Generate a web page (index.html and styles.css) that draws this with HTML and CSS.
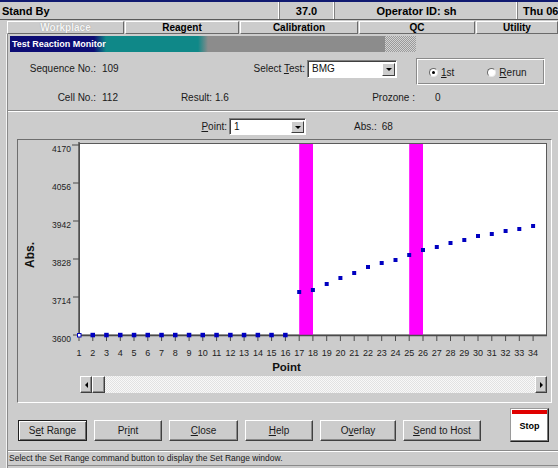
FILE: index.html
```html
<!DOCTYPE html>
<html lang="en">
<head>
<meta charset="utf-8">
<title>Test Reaction Monitor</title>
<link rel="stylesheet" href="styles.css">
</head>
<body>
<div class="app">
  <div class="statusbar">
    <div class="cell cell-state">Stand By</div>
    <div class="cell cell-temp">37.0</div>
    <div class="cell cell-op">Operator ID: sh</div>
    <div class="cell cell-date">Thu 06/</div>
  </div>
  <div class="tabs">
    <div class="tab tab-active t1">Workplace</div>
    <div class="tab t2">Reagent</div>
    <div class="tab t3">Calibration</div>
    <div class="tab t4">QC</div>
    <div class="tab t5">Utility</div>
  </div>
  <div class="window">
    <div class="titlebar">Test Reaction Monitor</div>
    <div class="row row1">
      <span class="lbl lbl-main">Sequence No.:</span>
      <span class="val val-main">109</span>
      <span class="lbl lbl-test">Select <u>T</u>est:</span>
      <div class="combo combo-test"><span class="combo-text">BMG</span><span class="combo-btn"><i class="tri-down"></i></span></div>
      <div class="radiogroup">
        <div class="radio"><span class="radio-dot checked"></span><span><u>1</u>st</span></div>
        <div class="radio radio2"><span class="radio-dot"></span><span><u>R</u>erun</span></div>
      </div>
    </div>
    <div class="row row2">
      <span class="lbl lbl-main">Cell No.:</span>
      <span class="val val-main">112</span>
      <span class="lbl lbl-result">Result:</span>
      <span class="val val-result">1.6</span>
      <span class="lbl lbl-prozone">Prozone :</span>
      <span class="val val-prozone">0</span>
    </div>
    <div class="sep"></div>
    <div class="row row3">
      <span class="lbl lbl-point"><u>P</u>oint:</span>
      <div class="combo combo-point"><span class="combo-text">1</span><span class="combo-btn"><i class="tri-down"></i></span></div>
      <span class="lbl lbl-abs">Abs.:</span>
      <span class="val val-abs">68</span>
    </div>
    <div class="chart-panel">
      <svg class="chart" width="533" height="220" viewBox="18 140 533 220">
        <rect x="79.5" y="143.5" width="467" height="191.5" fill="#ffffff" stroke="#5a5a5a"/>
        <rect x="299.2" y="144" width="13.8" height="191" fill="#ff00ff"/>
        <rect x="409.2" y="144" width="13.8" height="191" fill="#ff00ff"/>
        <path d="M79 142V337M79 335.5H547" stroke="#4a4a4a" stroke-width="1.4" fill="none"/>
        <path d="M72 145H79M73 183H79M73 221H79M73 259H79M73 297H79M73 335H79" stroke="#4a4a4a" stroke-width="1" fill="none"/>
        <path d="M79 336V341M92.8 336V341M106.5 336V341M120.3 336V341M134 336V341M147.8 336V341M161.6 336V341M175.3 336V341M189.1 336V341M202.8 336V341M216.6 336V341M230.4 336V341M244.1 336V341M257.9 336V341M271.6 336V341M285.4 336V341M299.2 336V341M312.9 336V341M326.7 336V341M340.4 336V341M354.2 336V341M368 336V341M381.7 336V341M395.5 336V341M409.2 336V341M423 336V341M436.8 336V341M450.5 336V341M464.3 336V341M478 336V341M491.8 336V341M505.6 336V341M519.3 336V341M533.1 336V341" stroke="#4a4a4a" stroke-width="1" fill="none"/>
        <g class="ylab">
          <text x="71" y="151.5">4170</text>
          <text x="71" y="189.5">4056</text>
          <text x="71" y="227.5">3942</text>
          <text x="71" y="265.5">3828</text>
          <text x="71" y="303.5">3714</text>
          <text x="71" y="341.5">3600</text>
        </g>
        <text class="ytitle" x="30" y="255" transform="rotate(-90 30 255)">Abs.</text>
        <g class="xlab">
          <text x="79" y="356">1</text><text x="92.8" y="356">2</text><text x="106.5" y="356">3</text><text x="120.3" y="356">4</text><text x="134" y="356">5</text><text x="147.8" y="356">6</text><text x="161.6" y="356">7</text><text x="175.3" y="356">8</text><text x="189.1" y="356">9</text><text x="202.8" y="356">10</text><text x="216.6" y="356">11</text><text x="230.4" y="356">12</text><text x="244.1" y="356">13</text><text x="257.9" y="356">14</text><text x="271.6" y="356">15</text><text x="285.4" y="356">16</text><text x="299.2" y="356">17</text><text x="312.9" y="356">18</text><text x="326.7" y="356">19</text><text x="340.4" y="356">20</text><text x="354.2" y="356">21</text><text x="368" y="356">22</text><text x="381.7" y="356">23</text><text x="395.5" y="356">24</text><text x="409.2" y="356">25</text><text x="423" y="356">26</text><text x="436.8" y="356">27</text><text x="450.5" y="356">28</text><text x="464.3" y="356">29</text><text x="478" y="356">30</text><text x="491.8" y="356">31</text><text x="505.6" y="356">32</text><text x="519.3" y="356">33</text><text x="533.1" y="356">34</text>
        </g>
        <rect x="77.5" y="333.5" width="3.5" height="3.5" fill="#ffffff" stroke="#0000c0" stroke-width="1"/>
        <g fill="#0000c0">
          <rect x="90.5" y="332.8" width="4.5" height="4.5"/><rect x="104.2" y="332.8" width="4.5" height="4.5"/><rect x="118" y="332.8" width="4.5" height="4.5"/><rect x="131.8" y="332.8" width="4.5" height="4.5"/><rect x="145.5" y="332.8" width="4.5" height="4.5"/><rect x="159.3" y="332.8" width="4.5" height="4.5"/><rect x="173" y="332.8" width="4.5" height="4.5"/><rect x="186.8" y="332.8" width="4.5" height="4.5"/><rect x="200.5" y="332.8" width="4.5" height="4.5"/><rect x="214.3" y="332.8" width="4.5" height="4.5"/><rect x="228.1" y="332.8" width="4.5" height="4.5"/><rect x="241.8" y="332.8" width="4.5" height="4.5"/><rect x="255.6" y="332.8" width="4.5" height="4.5"/><rect x="269.3" y="332.8" width="4.5" height="4.5"/><rect x="283.1" y="332.8" width="4.5" height="4.5"/>
          <rect x="297.2" y="290" width="4" height="4"/><rect x="310.9" y="288" width="4" height="4"/><rect x="324.7" y="282" width="4" height="4"/><rect x="338.4" y="276" width="4" height="4"/><rect x="352.2" y="271" width="4" height="4"/><rect x="366" y="265" width="4" height="4"/><rect x="379.7" y="261" width="4" height="4"/><rect x="393.5" y="258" width="4" height="4"/><rect x="407.2" y="253" width="4" height="4"/><rect x="421" y="248" width="4" height="4"/><rect x="434.8" y="245" width="4" height="4"/><rect x="448.5" y="241" width="4" height="4"/><rect x="462.3" y="238" width="4" height="4"/><rect x="476" y="234" width="4" height="4"/><rect x="489.8" y="232" width="4" height="4"/><rect x="503.6" y="229" width="4" height="4"/><rect x="517.3" y="227" width="4" height="4"/><rect x="531.1" y="224" width="4" height="4"/>
        </g>
      </svg>
      <div class="x-title">Point</div>
      <div class="scrollbar">
        <span class="sb-btn"><i class="tri-left"></i></span>
        <span class="sb-thumb"></span>
        <span class="sb-track"></span>
        <span class="sb-btn"><i class="tri-right"></i></span>
      </div>
    </div>
    <div class="buttons">
      <div class="btn btn-default b-set">S<u>e</u>t Range</div>
      <div class="btn b-print">Pr<u>i</u>nt</div>
      <div class="btn b-close"><u>C</u>lose</div>
      <div class="btn b-help"><u>H</u>elp</div>
      <div class="btn b-overlay">O<u>v</u>erlay</div>
      <div class="btn b-send"><u>S</u>end to Host</div>
      <div class="btn-stop"><span class="stop-stripe"></span><span class="stop-label">Stop</span></div>
    </div>
    <div class="sep sep2"></div>
    <div class="hint">Select the Set Range command button to display the Set Range window.</div>
  </div>
</div>
</body>
</html>
```

FILE: styles.css
```css
* { box-sizing: border-box; }
html, body { margin: 0; padding: 0; }
body {
  background: #cccccc;
  font-family: "Liberation Sans", Arial, sans-serif;
  color: #1a1a1a;
  width: 558px;
  height: 468px;
  overflow: hidden;
}
.app { width: 558px; height: 468px; display: flex; flex-direction: column; }

/* top status bar */
.statusbar {
  display: flex;
  height: 20px;
  border-top: 2px solid #101a70;
  border-bottom: 1px solid #5a5a5a;
  font-weight: bold;
  font-size: 11px;
  color: #000;
}
.cell { display: flex; align-items: center; border-left: 1px solid #808080; border-right: 1px solid #ffffff; white-space: nowrap; overflow: hidden; }
.cell-state { width: 279px; padding-left: 2px; border-left: none; }
.cell-temp { width: 55px; justify-content: center; }
.cell-op { width: 183px; justify-content: center; padding-right: 18px; }
.cell-date { flex: 1; min-width: 0; padding-left: 5px; border-right: none; }

/* tabs */
.tabs { display: flex; height: 13px; margin-top: 1px; padding-left: 7px; }
.tab {
  display: flex; align-items: center; justify-content: center;
  border: 1px solid; border-color: #ffffff #6a6a6a #6a6a6a #ffffff;
  font-size: 10px; font-weight: bold; color: #000;
  margin-right: 1px;
}
.t1 { width: 117px; }
.t2 { width: 114px; }
.t3 { width: 118px; }
.t4 { width: 116px; }
.t5 { flex: 1; margin-right: 0; }
.tab-active { color: #f6f6f6; text-shadow: 0 0 1px #8a8a8a; }

/* window */
.window {
  flex: 1;
  display: flow-root;
  margin-left: 6px;
  border-left: 1px solid #f4f4f4;
  padding-left: 1px;
  box-shadow: inset 1px 0 0 #8a8a8a;
}
.titlebar {
  margin-top: 2px;
  margin-left: 2px;
  width: 406px;
  height: 16px;
  padding-left: 2px;
  display: flex; align-items: center;
  color: #ffffff; font-weight: bold; font-size: 9px;
  background:
    linear-gradient(to right, #0c0c74 0, #0c0c74 84px, #0f8888 96px, #0f8888 188px, #8c8c8c 198px, #8c8c8c 375px, transparent 375px),
    repeating-conic-gradient(#9a9a9a 0 25%, #d2d2d2 0 50%) 0 0 / 2px 2px;
}

.row { display: flex; font-size: 10px; }
.row1 { margin-top: 6px; height: 27px; align-items: flex-start; }
.row1 .lbl, .row1 .val { margin-top: 2px; line-height: 18px; }
.row2 { margin-top: 4px; height: 18px; align-items: center; line-height: 18px; }
.row3 { margin-top: 6px; height: 17px; align-items: center; line-height: 17px; }
.lbl { white-space: nowrap; }
.val { white-space: nowrap; }
.lbl-main { width: 88px; text-align: right; }
.val-main { margin-left: 6px; width: 60px; }
.lbl-test { width: 143px; text-align: right; }
.lbl-result { width: 50px; text-align: right; }
.val-result { margin-left: 3px; width: 60px; }
.lbl-prozone { width: 140px; text-align: right; }
.val-prozone { margin-left: 20px; }
.lbl-point { width: 219px; text-align: right; }
.lbl-abs { margin-left: 48px; }
.val-abs { margin-left: 5px; }

/* combobox */
.combo {
  display: flex;
  height: 18px;
  background: #ffffff;
  border: 1px solid; border-color: #808080 #ffffff #ffffff #808080;
  box-shadow: inset 1px 1px 0 #404040;
}
.row1 .combo { margin-top: 2px; }
.combo-test { margin-left: 2px; width: 90px; }
.combo-point { margin-left: 2px; width: 77px; height: 17px; }
.combo-text { flex: 1; padding-left: 4px; font-size: 10px; line-height: 15px; color: #111; }
.combo-btn {
  width: 13px; margin: 2px 1px 1px 0;
  background: #cccccc;
  border: 1px solid; border-color: #ffffff #404040 #404040 #ffffff;
  display: flex; align-items: center; justify-content: center;
}
.tri-down { display: block; width: 0; height: 0; border-left: 3px solid transparent; border-right: 3px solid transparent; border-top: 3px solid #000; }
.tri-left { display: block; width: 0; height: 0; border-top: 3px solid transparent; border-bottom: 3px solid transparent; border-right: 3px solid #000; }
.tri-right { display: block; width: 0; height: 0; border-top: 3px solid transparent; border-bottom: 3px solid transparent; border-left: 3px solid #000; }

/* radio group */
.radiogroup {
  margin-left: 19px; width: 129px; height: 27px;
  border: 1px solid; border-color: #8a8a8a #ffffff #ffffff #8a8a8a;
  box-shadow: inset 1px 1px 0 #ffffff, inset -1px -1px 0 #8a8a8a;
  display: flex; align-items: center;
  padding-left: 12px; padding-top: 1px;
  font-size: 10px;
}
.radio { display: flex; align-items: center; gap: 3px; }
.radio2 { margin-left: 33px; }
.radio-dot {
  width: 9px; height: 9px; border-radius: 50%;
  background: #ffffff;
  border: 1px solid; border-color: #6a6a6a #e8e8e8 #e8e8e8 #6a6a6a;
  display: flex; align-items: center; justify-content: center;
}
.radio-dot.checked::after { content: ""; width: 3px; height: 3px; border-radius: 50%; background: #000; }

.sep { margin-top: 3px; height: 2px; border-top: 1px solid #8a8a8a; border-bottom: 1px solid #ffffff; }

/* chart panel */
.chart-panel {
  margin-top: 4px; margin-left: 9px;
  width: 535px; height: 264px;
  border: 1px solid; border-color: #6e6e6e #ffffff #ffffff #6e6e6e;
  background: #cccccc;
}
.chart { display: block; }
.ylab text { font-family: "Liberation Sans", Arial, sans-serif; font-size: 8.5px; fill: #222; text-anchor: end; }
.xlab text { font-family: "Liberation Sans", Arial, sans-serif; font-size: 9px; fill: #222; text-anchor: middle; }
.ytitle { font-family: "Liberation Sans", Arial, sans-serif; font-size: 12px; font-weight: bold; fill: #111; text-anchor: middle; dominant-baseline: central; }
.x-title { height: 14px; line-height: 14px; text-align: center; font-weight: bold; font-size: 11.5px; color: #111; padding-left: 4px; }

.scrollbar { display: flex; height: 17px; margin-top: 2px; margin-left: 62px; width: 467px; }
.sb-btn, .sb-thumb {
  width: 12px; background: #cccccc;
  border: 1px solid; border-color: #ffffff #404040 #404040 #ffffff;
  box-shadow: inset -1px -1px 0 #8a8a8a;
  display: flex; align-items: center; justify-content: center;
}
.sb-thumb { width: 13px; }
.sb-track { flex: 1; background: repeating-conic-gradient(#e2e2e2 0 25%, #f8f8f8 0 50%) 0 0 / 2px 2px; }

/* buttons */
.buttons { display: flex; align-items: flex-end; gap: 7px; height: 34px; margin-top: 5px; padding-left: 10px; }
.btn {
  height: 21px; margin-bottom: 1px;
  display: flex; align-items: center; justify-content: center;
  background: #cccccc;
  border: 1px solid; border-color: #ffffff #404040 #404040 #ffffff;
  box-shadow: inset -1px -1px 0 #8a8a8a;
  font-size: 10px; color: #1a1a1a; white-space: nowrap;
}
.btn-default { border-color: #202020; box-shadow: inset 1px 1px 0 #ffffff, inset -1px -1px 0 #6a6a6a; }
.b-set { width: 69px; }
.b-print { width: 68px; }
.b-close { width: 69px; }
.b-help { width: 68px; }
.b-overlay { width: 76px; }
.b-send { width: 78px; }
.btn-stop {
  margin-left: 22px; width: 39px; height: 34px;
  background: #ffffff;
  border: 1px solid; border-color: #9a9a9a #202020 #202020 #9a9a9a;
  box-shadow: inset -1px -1px 0 #7a7a7a;
  display: flex; flex-direction: column; align-items: stretch;
}
.stop-stripe { height: 4px; margin: 1px 1px 0 1px; background: #e00000; }
.stop-label { flex: 1; display: flex; align-items: center; justify-content: center; font-size: 9px; font-weight: bold; color: #000; padding-bottom: 3px; }

.sep2 { margin-top: 8px; }
.hint { height: 14px; line-height: 13px; padding-left: 1px; font-size: 8.5px; color: #1a1a1a; border-bottom: 1px solid #8a8a8a; white-space: nowrap; }
```
